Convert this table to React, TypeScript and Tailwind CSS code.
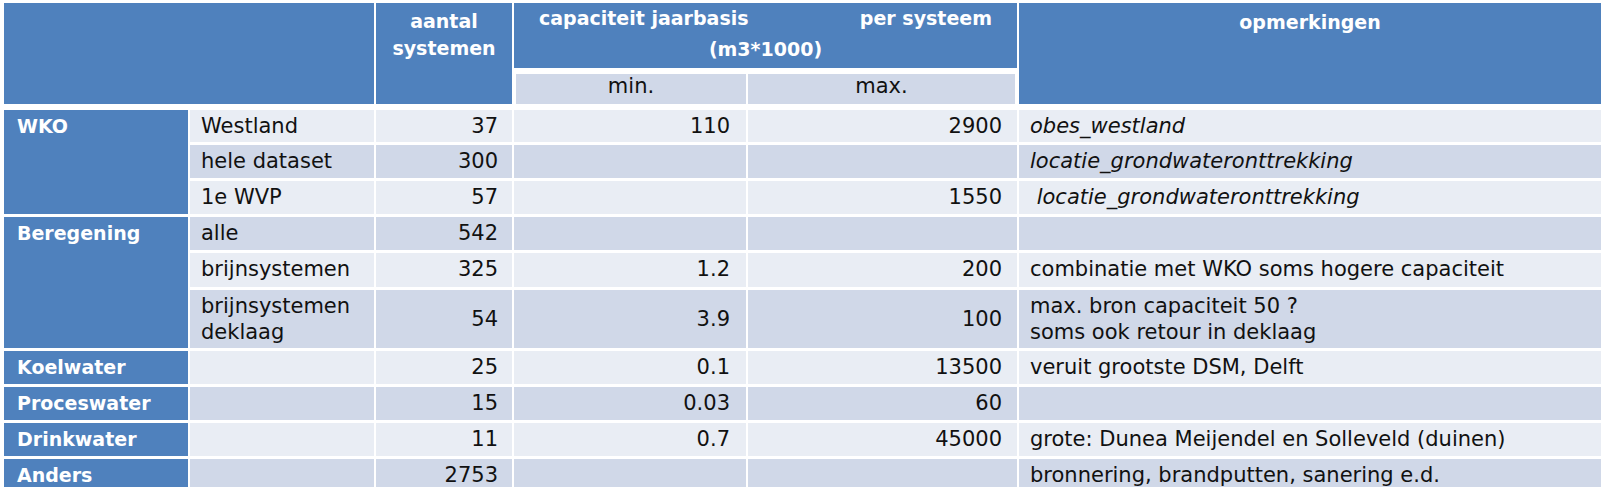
import React from "react";

type Row = {
  sub: string;
  n: string;
  min: string;
  max: string;
  note: string;
  italic?: boolean;
  dark: boolean;
  double?: boolean;
};

const rows: Row[] = [
  { sub: "Westland", n: "37", min: "110", max: "2900", note: "obes_westland", italic: true, dark: false },
  { sub: "hele dataset", n: "300", min: "", max: "", note: "locatie_grondwateronttrekking", italic: true, dark: true },
  { sub: "1e WVP", n: "57", min: "", max: "1550", note: " locatie_grondwateronttrekking", italic: true, dark: false },
  { sub: "alle", n: "542", min: "", max: "", note: "", dark: true },
  { sub: "brijnsystemen", n: "325", min: "1.2", max: "200", note: "combinatie met WKO soms hogere capaciteit", dark: false },
  {
    sub: "brijnsystemen\ndeklaag",
    n: "54",
    min: "3.9",
    max: "100",
    note: "max. bron capaciteit 50 ?\nsoms ook retour in deklaag",
    dark: true,
    double: true,
  },
  { sub: "", n: "25", min: "0.1", max: "13500", note: "veruit grootste DSM, Delft", dark: false },
  { sub: "", n: "15", min: "0.03", max: "60", note: "", dark: true },
  { sub: "", n: "11", min: "0.7", max: "45000", note: "grote: Dunea Meijendel en Solleveld (duinen)", dark: false },
  { sub: "", n: "2753", min: "", max: "", note: "bronnering, brandputten, sanering e.d.", dark: true },
];

const ROW_START = [
  "row-start-1",
  "row-start-2",
  "row-start-3",
  "row-start-4",
  "row-start-5",
  "row-start-6",
  "row-start-7",
  "row-start-8",
  "row-start-9",
  "row-start-10",
];

const groups = [
  { label: "WKO", cls: "row-start-1 row-span-3" },
  { label: "Beregening", cls: "row-start-4 row-span-3" },
  { label: "Koelwater", cls: "row-start-7" },
  { label: "Proceswater", cls: "row-start-8" },
  { label: "Drinkwater", cls: "row-start-9" },
  { label: "Anders", cls: "row-start-10" },
];

const COLS = "grid-cols-[184px_184px_136px_232px_269px_582px]";

export default function App() {
  return (
    <div className="w-[1609px] h-[490px] overflow-hidden bg-white pl-[4px] pt-[3px] font-['DejaVu_Sans',sans-serif] text-[#111111]">
      {/* Header */}
      <div className={`grid ${COLS} grid-rows-[65px_36px] gap-x-[2px]`}>
        <div className="col-start-1 col-span-2 row-start-1 row-span-2 bg-[#4f81bd]" />
        <div className="col-start-3 row-start-1 row-span-2 bg-[#4f81bd] pt-[5px] text-center text-[19px] font-bold leading-[27px] text-white">
          aantal
          <br />
          systemen
        </div>
        <div className="col-start-4 col-span-2 row-start-1 bg-[#4f81bd] px-[25px] text-[19px] font-bold leading-[31px] text-white">
          <div className="flex justify-between">
            <span>capaciteit jaarbasis</span>
            <span>per systeem</span>
          </div>
          <div className="text-center">(m3*1000)</div>
        </div>
        <div className="col-start-4 row-start-2 bg-white pl-[2px] pt-[6px]">
          <div className="h-full bg-[#d0d8e8] text-center text-[21px] leading-[24px]">min.</div>
        </div>
        <div className="col-start-5 row-start-2 bg-white pr-[2px] pt-[6px]">
          <div className="h-full bg-[#d0d8e8] text-center text-[21px] leading-[24px]">max.</div>
        </div>
        <div className="col-start-6 row-start-1 row-span-2 bg-[#4f81bd] pt-[6px] text-center text-[19px] font-bold leading-[27px] text-white">
          opmerkingen
        </div>
      </div>

      {/* Body */}
      <div
        className={`mt-[6px] grid ${COLS} grid-rows-[32px_33px_33px_33px_34px_58px_33px_33px_33px_28px] gap-x-[2px] gap-y-[3px] text-[21px]`}
      >
        {groups.map((g) => (
          <div
            key={g.label}
            className={`col-start-1 ${g.cls} bg-[#4f81bd] pl-[13px] pt-[4px] text-[19px] font-bold leading-[24px] text-white`}
          >
            {g.label}
          </div>
        ))}
        {rows.map((r, i) => {
          const bg = r.dark ? "bg-[#d0d8e8]" : "bg-[#e9edf4]";
          const rs = ROW_START[i];
          const textLines = r.double ? "leading-[26px] pt-[3px]" : "leading-[24px] pt-[4px]";
          const numAlign = r.double ? "items-center leading-[24px]" : "items-start leading-[24px] pt-[4px]";
          return (
            <React.Fragment key={i}>
              <div className={`col-start-2 ${rs} ${bg} whitespace-pre-line pl-[11px] ${textLines}`}>{r.sub}</div>
              <div className={`col-start-3 ${rs} ${bg} flex justify-end pr-[14px] ${numAlign}`}>{r.n}</div>
              <div className={`col-start-4 ${rs} ${bg} flex justify-end pr-[16px] ${numAlign}`}>{r.min}</div>
              <div className={`col-start-5 ${rs} ${bg} flex justify-end pr-[15px] ${numAlign}`}>{r.max}</div>
              <div
                className={`col-start-6 ${rs} ${bg} whitespace-pre-wrap pl-[11px] ${textLines} ${
                  r.italic ? "italic" : ""
                }`}
              >
                {r.note}
              </div>
            </React.Fragment>
          );
        })}
      </div>
    </div>
  );
}
